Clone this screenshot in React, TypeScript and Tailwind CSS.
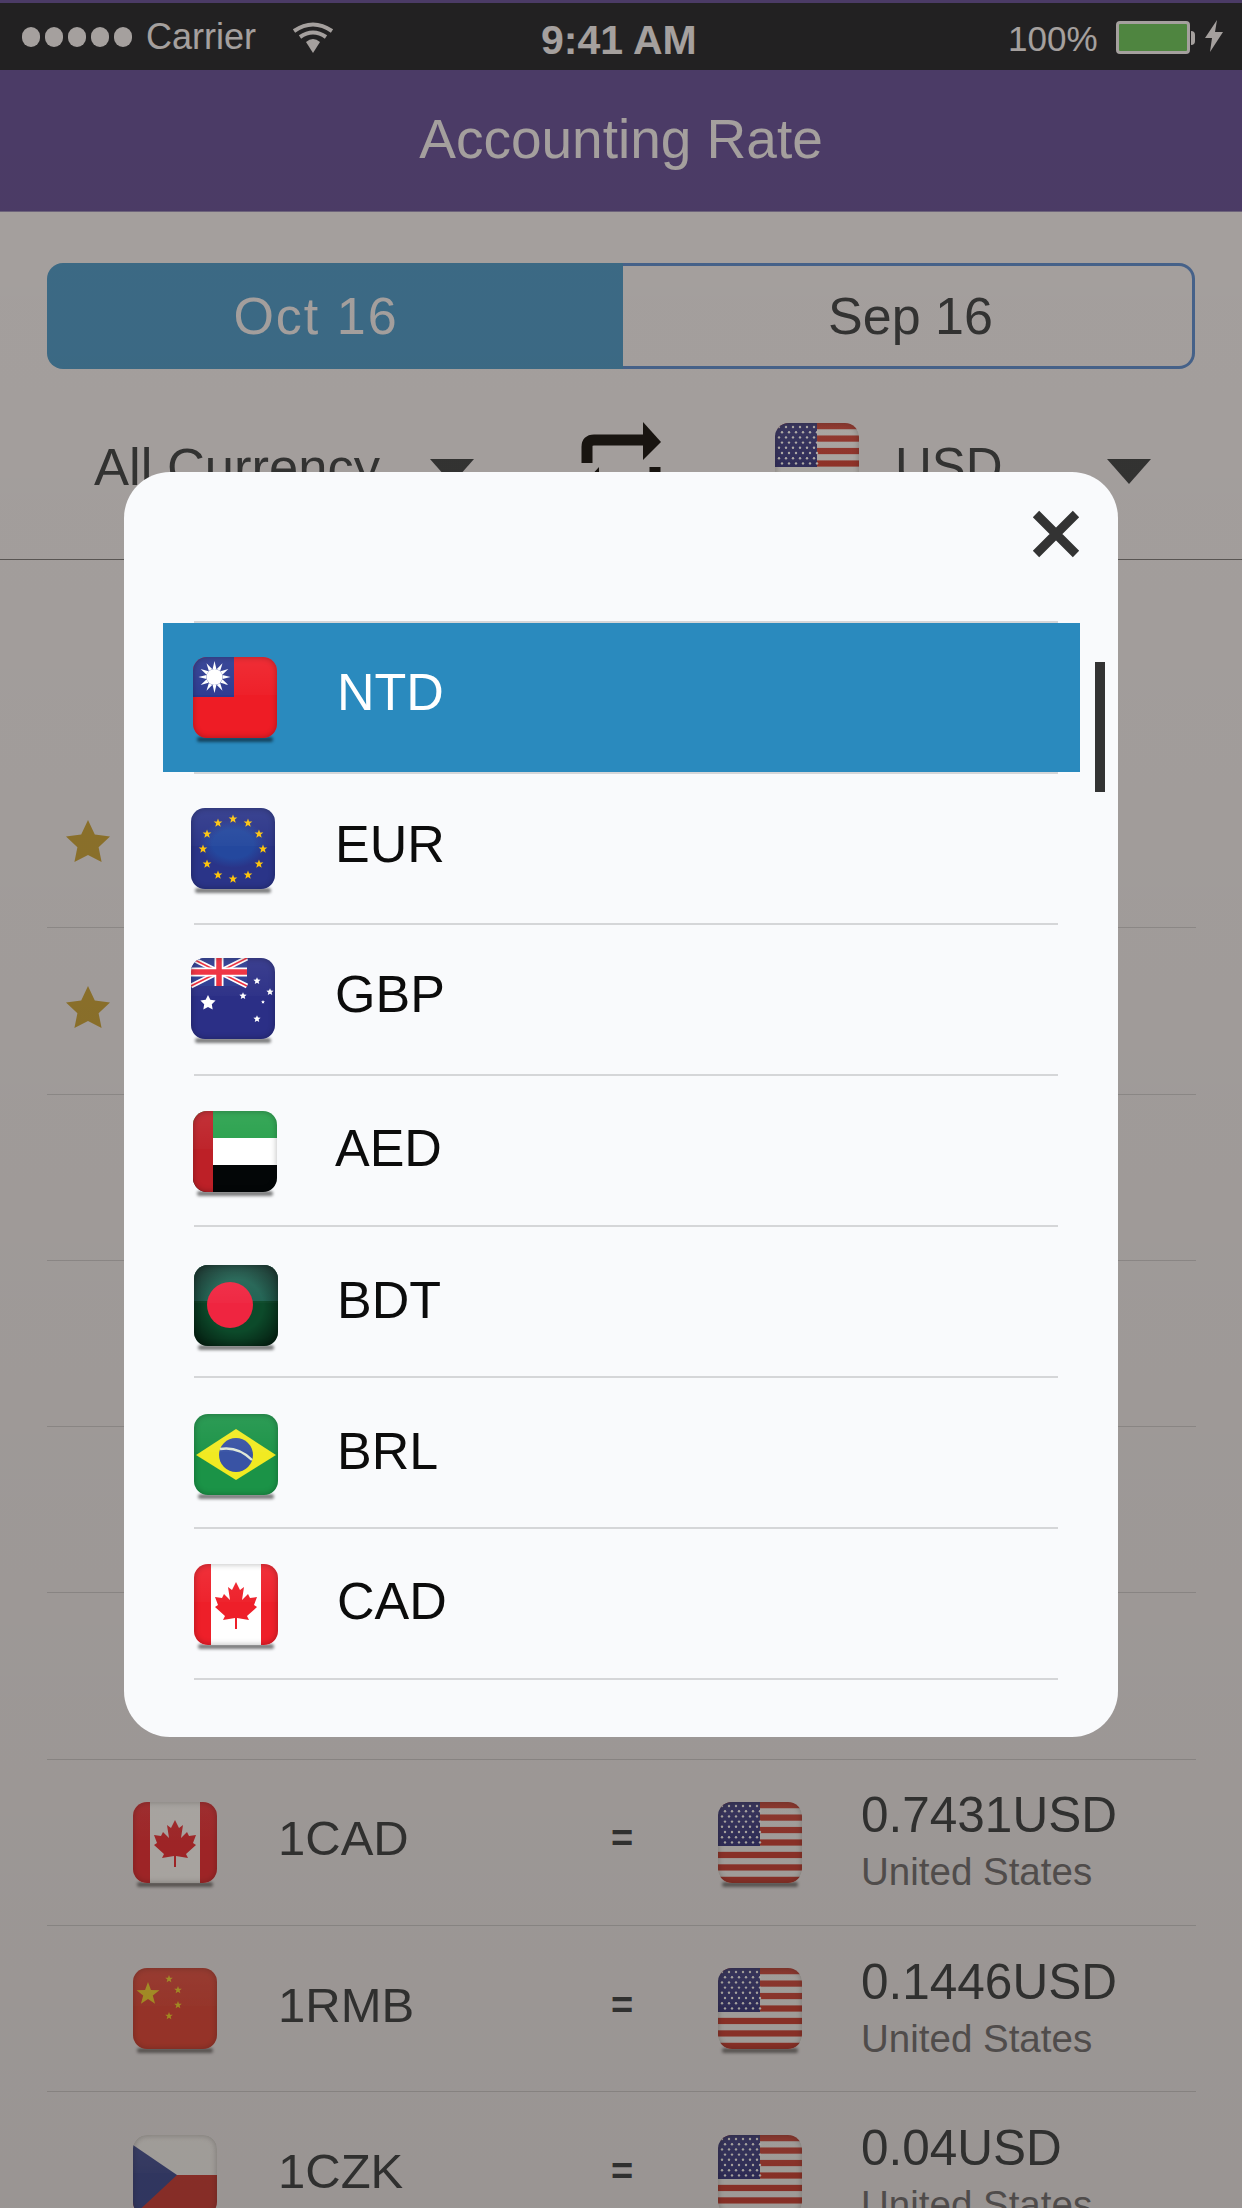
import type { ReactNode } from 'react';

const starPoints = (cx: number, cy: number, r: number, inner = 0.42, turn = 0) =>
    Array.from({ length: 10 }, (_, i) => {
        const a = (Math.PI / 5) * i - Math.PI / 2 + turn;
        const d = i % 2 === 0 ? r : r * inner;
        return `${(cx + d * Math.cos(a)).toFixed(2)},${(cy + d * Math.sin(a)).toFixed(2)}`;
    }).join(' ');

const MAPLE =
    '42,18 46,26 50,23 48,36 54,30 56,34 63,33 60,41 63,43 53,52 55,56 43,54 43,65 41,65 41,54 29,56 31,52 21,43 24,41 21,33 28,34 30,30 36,36 34,23 38,26';

function FlagArt({ code }: { code: string }) {
    switch (code) {
        case 'NTD': {
            const rays = Array.from({ length: 12 }, (_, i) => i * 30);
            return (
                <>
                    <rect width="84" height="81" fill="#ee1c25" />
                    <rect width="41" height="40" fill="#2b3990" />
                    {rays.map((deg) => (
                        <polygon key={deg} points="19.6,12 23.4,12 21.5,4" fill="#fff" transform={`rotate(${deg} 21.5 20)`} />
                    ))}
                    <circle cx="21.5" cy="20" r="8" fill="#fff" />
                </>
            );
        }
        case 'EUR': {
            const stars = Array.from({ length: 12 }, (_, i) => (i * Math.PI) / 6);
            return (
                <>
                    <defs>
                        <radialGradient id="eur-glow">
                            <stop offset="0%" stopColor="#24489e" />
                            <stop offset="60%" stopColor="#24489e" />
                            <stop offset="100%" stopColor="#2a3488" />
                        </radialGradient>
                    </defs>
                    <rect width="84" height="81" fill="#2a3488" />
                    <ellipse cx="42" cy="36" rx="34" ry="24" fill="url(#eur-glow)" />
                    {stars.map((a, i) => (
                        <polygon
                            key={i}
                            points={starPoints(42 + 30 * Math.sin(a), 41 - 30 * Math.cos(a), 4.6)}
                            fill="#fcc30e"
                        />
                    ))}
                </>
            );
        }
        case 'GBP':
            return (
                <>
                    <rect width="84" height="81" fill="#2b2f86" />
                    <rect width="56" height="28" fill="#2b3990" />
                    <path d="M0 0 L56 28 M56 0 L0 28" stroke="#fff" strokeWidth="5" />
                    <path d="M0 0 L56 28 M56 0 L0 28" stroke="#ee2a3a" strokeWidth="1.6" />
                    <path d="M28 0 V28 M0 14 H56" stroke="#fff" strokeWidth="9" />
                    <path d="M28 0 V28 M0 14 H56" stroke="#ee2a3a" strokeWidth="5.5" />
                    <polygon points={starPoints(17, 45, 8, 0.5)} fill="#fff" />
                    <polygon points={starPoints(66, 23, 3.8, 0.45)} fill="#fff" />
                    <polygon points={starPoints(79, 34, 3.8, 0.45)} fill="#fff" />
                    <polygon points={starPoints(52, 38, 3.8, 0.45)} fill="#fff" />
                    <polygon points={starPoints(72, 44, 2, 0.5)} fill="#fff" />
                    <polygon points={starPoints(66, 61, 3.8, 0.45)} fill="#fff" />
                </>
            );
        case 'AED':
            return (
                <>
                    <rect width="84" height="27" fill="#27a04b" />
                    <rect y="27" width="84" height="27" fill="#fff" />
                    <rect y="54" width="84" height="27" fill="#030607" />
                    <rect width="20" height="81" fill="#bd2027" />
                </>
            );
        case 'BDT':
            return (
                <>
                    <defs>
                        <radialGradient id="bdt-edge" r="0.72">
                            <stop offset="45%" stopColor="#000" stopOpacity="0" />
                            <stop offset="100%" stopColor="#000" stopOpacity="0.75" />
                        </radialGradient>
                    </defs>
                    <rect width="84" height="81" fill="#0c4a2a" />
                    <rect width="84" height="36" fill="#1f6151" />
                    <rect width="84" height="81" fill="url(#bdt-edge)" />
                    <circle cx="36" cy="40" r="23" fill="#ef2540" />
                </>
            );
        case 'BRL':
            return (
                <>
                    <rect width="84" height="81" fill="#1b9347" />
                    <polygon points="2,41 42,15 82,41 42,66" fill="#f1ea22" />
                    <circle cx="42" cy="41" r="17" fill="#3953a4" />
                    <path d="M26 35 Q44 32 58 46" stroke="#dfe8d8" strokeWidth="2.4" fill="none" />
                </>
            );
        case 'CAD':
            return (
                <>
                    <rect width="84" height="81" fill="#fff" />
                    <rect width="17" height="81" fill="#ee1f29" />
                    <rect x="67" width="17" height="81" fill="#ee1f29" />
                    <polygon points={MAPLE} fill="#ee1f29" />
                </>
            );
        case 'USD': {
            const reds = [0, 2, 4, 6, 8, 10, 12];
            const dots = Array.from({ length: 48 }, (_, i) => i);
            return (
                <>
                    <rect width="84" height="81" fill="#f4f4f4" />
                    {reds.map((n) => (
                        <rect key={n} y={(n * 81) / 13} width="84" height={81 / 13} fill="#c9342a" />
                    ))}
                    <rect width="42" height="44" fill="#2a2c7c" />
                    {dots.map((i) => (
                        <circle
                            key={i}
                            cx={4 + (i % 6) * 7 + (Math.floor(i / 6) % 2) * 3}
                            cy={4 + Math.floor(i / 6) * 5.2}
                            r="1.2"
                            fill="#fff"
                        />
                    ))}
                </>
            );
        }
        case 'RMB':
            return (
                <>
                    <rect width="84" height="81" fill="#e23a2d" />
                    <polygon points={starPoints(15, 26, 12)} fill="#f7d21e" />
                    <polygon points={starPoints(36, 11, 4)} fill="#f7d21e" />
                    <polygon points={starPoints(45, 22, 4)} fill="#f7d21e" />
                    <polygon points={starPoints(45, 37, 4)} fill="#f7d21e" />
                    <polygon points={starPoints(36, 48, 4)} fill="#f7d21e" />
                </>
            );
        case 'CZK':
            return (
                <>
                    <rect width="84" height="40" fill="#f5f5f5" />
                    <rect y="40" width="84" height="41" fill="#c9302c" />
                    <polygon points="0,10 44,40 0,81" fill="#30408f" />
                </>
            );
        default:
            return null;
    }
}

function Flag({ code, className = '' }: { code: string; className?: string }) {
    return (
        <div className={`relative w-[84px] h-[81px] shrink-0 ${className}`}>
            <div className="absolute left-[4px] right-[4px] top-[80px] h-[5px] rounded-full bg-black/50 blur-[1.5px]" />
            <div className="absolute inset-0 rounded-[14px] overflow-hidden">
                <svg viewBox="0 0 84 81" className="block w-[84px] h-[81px]">
                    <FlagArt code={code} />
                </svg>
                <div className="absolute inset-x-0 top-0 h-[38px] bg-linear-to-b from-white/8 to-white/2" />
                <div className="absolute inset-0 rounded-[14px] shadow-[inset_0_0_6px_rgba(0,0,0,0.3)]" />
            </div>
        </div>
    );
}

function StatusBar() {
    return (
        <div className="h-[70px] border-t-[3px] border-[#55418f] bg-[#11171e] text-[#ebe9ed] flex items-center relative">
            <div className="flex gap-[5px] ml-[22px]">
                {[0, 1, 2, 3, 4].map((i) => (
                    <span key={i} className="block w-[18px] h-[20px] rounded-full bg-[#ebe9ed]" />
                ))}
            </div>
            <span className="ml-[14px] text-[36px] leading-none">Carrier</span>
            <svg viewBox="0 0 42 32" className="ml-[36px] w-[42px] h-[32px]" fill="none" stroke="#ebe9ed" strokeWidth="4">
                <path d="M2 10 Q21 -3 40 10" />
                <path d="M8 16 Q21 7 34 16" />
                <path d="M21 32 L14 21 Q21 15 28 21 Z" fill="#ebe9ed" stroke="none" />
            </svg>
            <span className="absolute left-[541px] top-[14px] text-[41px] leading-[46px] font-bold">9:41 AM</span>
            <span className="absolute left-[1008px] top-[16px] text-[35px] leading-[40px]">100%</span>
            <div className="absolute left-[1116px] top-[18px] w-[74px] h-[33px] rounded-[4px] border-[3px] border-[#ebe9ed] bg-[#5cbc50]" />
            <div className="absolute left-[1191px] top-[28px] w-[4px] h-[14px] rounded-r-full bg-[#ebe9ed]" />
            <svg viewBox="0 0 18 32" className="absolute left-[1205px] top-[17px] w-[18px] h-[32px]">
                <polygon points="12,0 0,18 7,18 5,32 18,12 10,12" fill="#ebe9ed" />
            </svg>
        </div>
    );
}

function RateRow({ star, code, flag, value }: { star?: boolean; code?: string; flag?: string; value?: string }) {
    return (
        <div className="h-[166.3px] border-b border-[#c6c6ca] flex items-center">
            <div className="w-[86px] pl-[19px] pb-[8px]">
                {star && (
                    <svg viewBox="0 0 44 42" className="block w-[44px] h-[42px]">
                        <polygon points="22,0 28.8,14.6 44,16.4 32.6,27.3 35.6,42 22,34.9 8.4,42 11.4,27.3 0,16.4 15.2,14.6" fill="#c49d2e" />
                    </svg>
                )}
            </div>
            {flag && (
                <>
                    <Flag code={flag} />
                    <div className="w-[394px] pl-[61px] pb-[8px] text-[49px] leading-[56px] text-[#2d343a]">{code}</div>
                    <div className="w-[22px] pb-[8px] text-[38px] leading-[56px] font-bold text-[#2d343a] text-center">=</div>
                    <Flag code="USD" className="ml-[85px]" />
                    <div className="ml-[59px] pt-[8px]">
                        <div className="text-[49.5px] leading-[52px] text-[#2d343a]">{value}</div>
                        <div className="text-[38.5px] leading-[62px] text-[#66676b]">United States</div>
                    </div>
                </>
            )}
        </div>
    );
}

const modalItems = [
    { code: 'NTD', flagClass: 'ml-0', textClass: 'ml-[60px] pb-[11px]', active: true },
    { code: 'EUR', flagClass: '-ml-[2px]', textClass: 'ml-[60px] pb-[9px]' },
    { code: 'GBP', flagClass: '-ml-[2px] -mt-[2px]', textClass: 'ml-[60px] pb-[12px]' },
    { code: 'AED', flagClass: 'mt-[2px]', textClass: 'ml-[58px] pb-[5px]' },
    { code: 'BDT', flagClass: 'ml-[1px] mt-[8px]', textClass: 'ml-[59px] pb-[3px]' },
    { code: 'BRL', flagClass: 'ml-[1px] mt-[3px]', textClass: 'ml-[59px] pb-[3px]' },
    { code: 'CAD', flagClass: 'ml-[1px] mt-[2px]', textClass: 'ml-[59px] pb-[6px]' },
];

function CurrencyModal() {
    return (
        <div className="absolute left-[124px] top-[472px] w-[994px] h-[1265px] rounded-[46px] bg-[#f9fafc] pt-[149px]">
            <button className="absolute left-[908px] top-[38px] w-[48px] h-[48px]">
                <svg viewBox="0 0 48 48" className="block w-[48px] h-[48px]">
                    <path d="M4 4 L44 44 M44 4 L4 44" stroke="#333" strokeWidth="9" />
                </svg>
            </button>
            <div className="absolute left-[971px] top-[190px] w-[10px] h-[130px] bg-[#333]" />

            <div className="ml-[70px] w-[864px] h-[2px] bg-[#d5d6d8]" />
            {modalItems.map((item) => (
                <div key={item.code} className="ml-[39px] w-[917px]">
                    <div className={`h-[149px] flex items-center pl-[30px] text-[52px] ${item.active ? 'bg-[#2a8abe] text-white' : 'text-[#0c0c0c]'}`}>
                        <Flag code={item.code} className={item.flagClass} />
                        <span className={item.textClass}>{item.code}</span>
                    </div>
                    <div className="ml-[31px] w-[864px] h-[2px] bg-[#d5d6d8]" />
                </div>
            ))}
        </div>
    );
}

function Toolbar({ children }: { children: ReactNode }) {
    return <div className="h-[191px] border-b border-[#6e6e71] pl-[94px] flex items-start">{children}</div>;
}

export default function App() {
    return (
        <div className="relative w-[1242px] h-[2208px] overflow-hidden bg-[#ebe9ed] font-['Liberation_Sans',Arial,sans-serif]">
            <StatusBar />

            <header className="h-[142px] pb-[3px] border-b border-[#8f85b5] bg-[#55418f] text-[#ebe9ed] text-[55px] flex items-center justify-center">
                Accounting Rate
            </header>

            <div className="mt-[51px] mx-[47px] w-[1148px] h-[106px] flex text-[52px]">
                <div className="w-[576px] rounded-l-[16px] pr-[38px] bg-[#3c8fc3] text-[#ebe9ed] tracking-[2px] flex items-center justify-center">Oct 16</div>
                <div className="flex-1 pl-[6px] rounded-r-[16px] border-[3px] border-l-0 border-[#4d82cb] text-[#2d343a] flex items-center justify-center">Sep 16</div>
            </div>

            <Toolbar>
                <div className="w-[336px] mt-[68px] text-[52.5px] leading-[60px] text-[#2d343a] whitespace-nowrap">All Currency</div>
                <div className="w-[151px] mt-[90px]">
                    <div className="w-0 h-0 border-x-[22px] border-x-transparent border-t-[25px] border-t-[#2d343a]" />
                </div>
                <div className="w-[194px] mt-[52px]">
                    <svg viewBox="0 0 80 88" className="w-[80px] h-[88px]" fill="none" stroke="#000" strokeWidth="11">
                        <path d="M6 42 V26 Q6 19 13 19 H64" />
                        <polygon points="62,1 80,21 62,39" fill="#000" stroke="none" />
                        <path d="M74 46 V62 Q74 69 67 69 H16" />
                        <polygon points="18,86 0,66 18,46" fill="#000" stroke="none" />
                    </svg>
                </div>
                <div className="w-[120px] mt-[54px]"><Flag code="USD" /></div>
                <div className="w-[212px] mt-[68px] text-[51px] leading-[60px] text-[#2d343a]">USD</div>
                <div className="mt-[90px]">
                    <div className="w-0 h-0 border-x-[22px] border-x-transparent border-t-[25px] border-t-[#2d343a]" />
                </div>
            </Toolbar>

            <div className="mt-[202px] mx-[47px] w-[1149px]">
                <RateRow star />
                <RateRow star />
                <RateRow />
                <RateRow />
                <RateRow />
                <RateRow />
                <RateRow code="1CAD" flag="CAD" value="0.7431USD" />
                <RateRow code="1RMB" flag="RMB" value="0.1446USD" />
                <RateRow code="1CZK" flag="CZK" value="0.04USD" />
            </div>

            {/* Dim layer over the page, slightly darker towards the bottom */}
            <div className="absolute inset-0 bg-[#3c3228]/40" />
            <div className="absolute inset-0 bg-linear-to-b from-transparent to-black/7" />

            <CurrencyModal />
        </div>
    );
}
